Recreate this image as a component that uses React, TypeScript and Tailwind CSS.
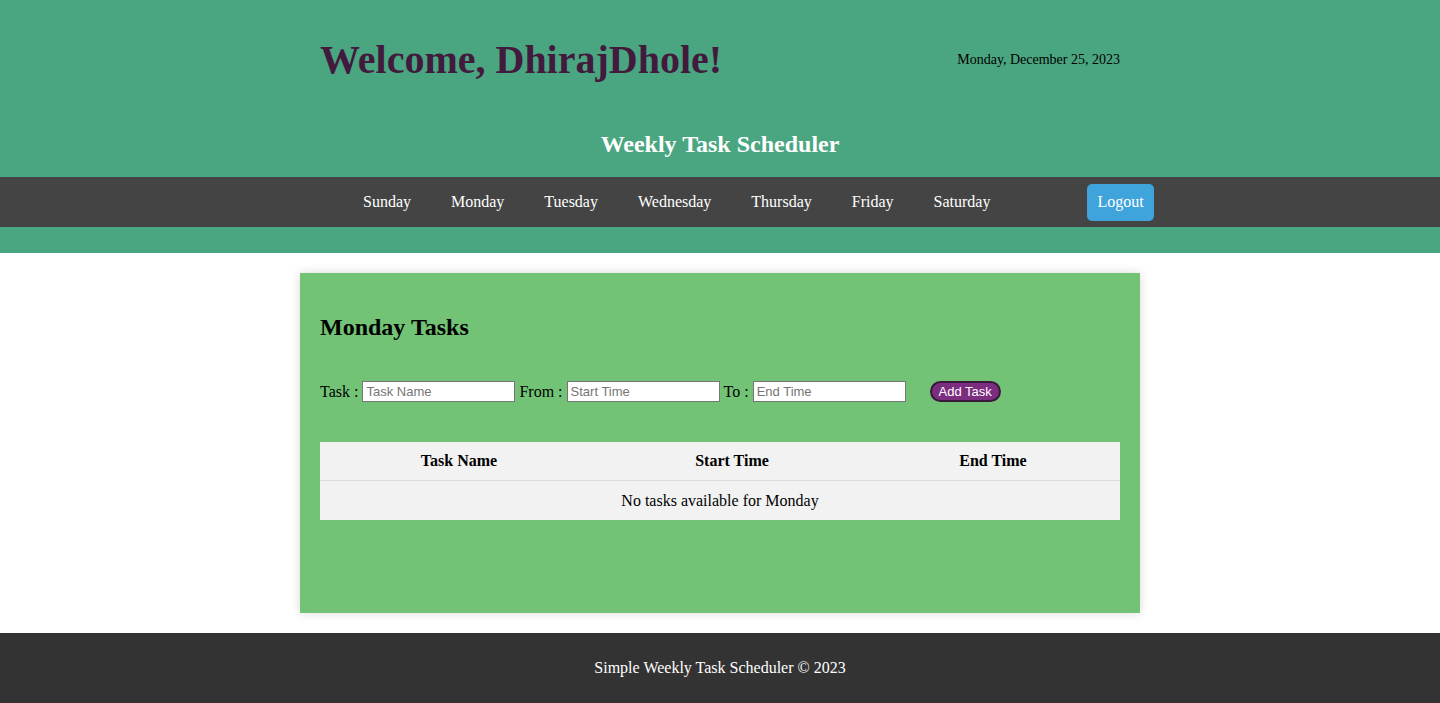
import React from "react";

const days = ["Sunday", "Monday", "Tuesday", "Wednesday", "Thursday", "Friday", "Saturday"];

const App = () => {
  return (
    <div className="min-h-[703px] bg-white font-['Liberation_Serif','Times_New_Roman',serif] text-black">
      <header className="bg-[#4aa680] pt-[37px] pb-[26px]">
        <div className="mx-auto flex h-[46px] w-[800px] items-center justify-between">
          <h1 className="text-[40px] font-bold leading-[46px] text-[#421a3e]">Welcome, DhirajDhole!</h1>
          <p className="text-[14px] leading-[18px]">Monday, December 25, 2023</p>
        </div>
        <h2 className="mt-[47px] text-center text-[24px] font-bold leading-[28px] text-white">
          Weekly Task Scheduler
        </h2>
        <nav className="mt-[19px] flex h-[50px] items-center bg-[#444444] pl-[363px]">
          <ul className="flex gap-[40px] text-[16px] text-white">
            {days.map((d) => (
              <li key={d}>
                <a href="#">{d}</a>
              </li>
            ))}
          </ul>
          <button className="ml-[97px] h-[37px] rounded-[5px] bg-[#3fa3dc] px-[10px] text-[16px] text-white">
            Logout
          </button>
        </nav>
      </header>

      <main className="mx-auto mt-[20px] h-[340px] w-[840px] bg-[#72c375] p-[20px] shadow-[0_0_10px_rgba(0,0,0,0.15)]">
        <h2 className="mt-[20px] text-[24px] font-bold leading-[28px]">Monday Tasks</h2>
        <form className="mt-[40px] flex h-[21px] items-center text-[16px]" onSubmit={(e) => e.preventDefault()}>
          <label>Task :</label>
          <input
            placeholder="Task Name"
            className="ml-[4px] h-[21px] w-[153px] border border-[#767676] bg-white px-[3px] font-['Liberation_Sans',Arial,sans-serif] text-[13px] placeholder:text-[#757575]"
          />
          <label className="ml-[4px]">From :</label>
          <input
            placeholder="Start Time"
            className="ml-[4px] h-[21px] w-[153px] border border-[#767676] bg-white px-[3px] font-['Liberation_Sans',Arial,sans-serif] text-[13px] placeholder:text-[#757575]"
          />
          <label className="ml-[4px]">To :</label>
          <input
            placeholder="End Time"
            className="ml-[4px] h-[21px] w-[153px] border border-[#767676] bg-white px-[3px] font-['Liberation_Sans',Arial,sans-serif] text-[13px] placeholder:text-[#757575]"
          />
          <button
            type="submit"
            className="ml-[24px] h-[21px] w-[71px] rounded-full border-2 border-[#3a1839] bg-[#7b2d80] font-['Liberation_Sans',Arial,sans-serif] text-[13px] leading-none text-white"
          >
            Add Task
          </button>
        </form>

        <div className="mt-[40px] w-[800px] bg-[#f2f2f2] text-[16px]">
          <div className="grid h-[39px] grid-cols-[278px_268px_254px] items-center border-b border-[#dddddd] font-bold">
            <div className="text-center">Task Name</div>
            <div className="text-center">Start Time</div>
            <div className="text-center">End Time</div>
          </div>
          <div className="flex h-[39px] items-center justify-center">No tasks available for Monday</div>
        </div>
      </main>

      <footer className="mt-[20px] flex h-[70px] items-center justify-center bg-[#333333] text-[16px] text-white">
        Simple Weekly Task Scheduler © 2023
      </footer>
    </div>
  );
};

export default App;
